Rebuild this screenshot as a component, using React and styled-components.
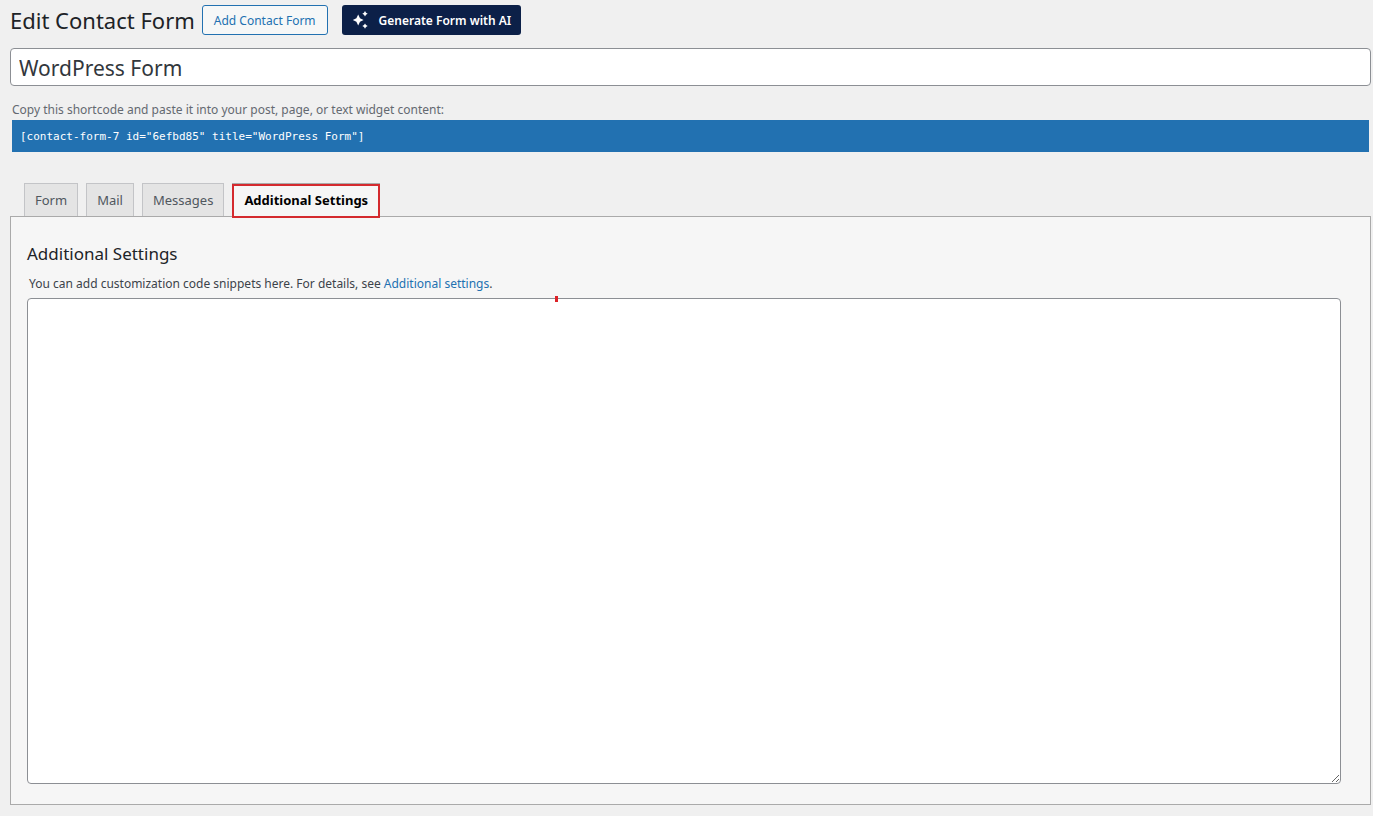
import React, { useState } from 'react';
import styled, { createGlobalStyle } from 'styled-components';

const GlobalStyle = createGlobalStyle`
  * {
    box-sizing: border-box;
  }

  body {
    margin: 0;
    background: #f0f0f0;
    color: #3c434a;
    font-family: "Noto Sans", "Open Sans", sans-serif;
    font-size: 12px;
    line-height: 20px;
  }

  button,
  input,
  textarea {
    font-family: inherit;
    margin: 0;
  }
`;

const Page = styled.main`
  padding: 5px 2px 11px 10px;
`;

const Header = styled.header`
  display: flex;
  align-items: center;
  height: 30px;
  margin-bottom: 13px;
`;

const PageTitle = styled.h1`
  margin: 0 7px 0 0;
  color: #1d2327;
  font-size: 22px;
  font-weight: 400;
  line-height: 30px;
`;

const AddButton = styled.button`
  height: 30px;
  margin-right: 14px;
  padding: 0 11px;
  border: 1px solid #2271b1;
  border-radius: 3px;
  background: #f6f7f7;
  color: #2271b1;
  font-size: 12px;
  cursor: pointer;
`;

const GenerateButton = styled.button`
  display: flex;
  align-items: center;
  gap: 9px;
  height: 30px;
  padding: 0 10px;
  border: none;
  border-radius: 3px;
  background: #0c2048;
  color: #fff;
  font-size: 12px;
  font-weight: 600;
  cursor: pointer;
`;

const TitleInput = styled.input`
  display: block;
  width: 100%;
  height: 38px;
  padding: 2px 8px 0;
  border: 1px solid #8c8f94;
  border-radius: 4px;
  background: #fff;
  color: #32373c;
  font-size: 21px;
`;

const Shortcode = styled.div`
  margin: 14px 2px 31px;
`;

const ShortcodeLabel = styled.label`
  display: block;
  color: #646970;
`;

const ShortcodeInput = styled.input`
  display: block;
  width: 100%;
  height: 32px;
  padding: 0 8px;
  border: none;
  border-radius: 0;
  background: #2271b1;
  color: #fff;
  font-family: "DejaVu Sans Mono", monospace !important;
  font-size: 11px;
`;

const Tabs = styled.div`
  display: flex;
  gap: 8px;
  padding-left: 14px;
`;

const Tab = styled.button`
  position: relative;
  height: 33px;
  padding: 0 10px;
  border: 1px solid #c3c4c7;
  border-bottom: none;
  background: #e4e4e4;
  color: #50575e;
  font-size: 13px;
  cursor: pointer;

  &[aria-selected='true'] {
    height: 34px;
    margin-bottom: -1px;
    padding: 0 11px 2px;
    border-color: #aaa;
    background: #f6f6f6;
    color: #000;
    font-weight: 700;
    z-index: 1;
  }
`;

const Highlight = styled.span`
  position: absolute;
  inset: 0 -1px -1px;
  border: 2px solid #d42a2e;
`;

const Panel = styled.section`
  padding: 25px 29px 20px 16px;
  border: 1px solid #aaa;
  background: #f6f6f6;
`;

const PanelTitle = styled.h2`
  margin: 0;
  color: #1d2327;
  font-size: 17px;
  font-weight: 400;
  line-height: 24px;
`;

const Legend = styled.label`
  display: block;
  margin: 8px 2px 4px;
`;

const Link = styled.a`
  color: #2271b1;
  text-decoration: none;
`;

const SettingsField = styled.div`
  position: relative;
`;

const SettingsArea = styled.textarea`
  display: block;
  width: 100%;
  height: 486px;
  padding: 2px 6px;
  border: 1px solid #8c8f94;
  border-radius: 4px;
  background: #fff;
  font-size: 13px;
  resize: vertical;
`;

const Marker = styled.span`
  position: absolute;
  top: -2px;
  left: 528px;
  width: 3px;
  height: 6px;
  background: #dc2127;
`;

const Sparkles = () => (
  <svg width="18" height="18" viewBox="0 0 18 18" fill="#fff" aria-hidden="true">
    <path d="M6.2 3.6 L8 7.2 L11.6 9 L8 10.8 L6.2 14.4 L4.4 10.8 L0.8 9 L4.4 7.2Z" />
    <path d="M13 0 L14 1.7 L15.7 2.7 L14 3.7 L13 5.4 L12 3.7 L10.3 2.7 L12 1.7Z" />
    <path d="M13 12.4 L14 14.1 L15.7 15.1 L14 16.1 L13 17.8 L12 16.1 L10.3 15.1 L12 14.1Z" />
  </svg>
);

const TABS = ['Form', 'Mail', 'Messages', 'Additional Settings'];

const App = () => {
  const [activeTab, setActiveTab] = useState('Additional Settings');
  const [title, setTitle] = useState('WordPress Form');
  const [settings, setSettings] = useState('');

  return (
    <>
      <GlobalStyle />
      <Page>
        <Header>
          <PageTitle>Edit Contact Form</PageTitle>
          <AddButton type="button">Add Contact Form</AddButton>
          <GenerateButton type="button">
            <Sparkles />
            Generate Form with AI
          </GenerateButton>
        </Header>

        <TitleInput
          aria-label="Form title"
          value={title}
          onChange={(e) => setTitle(e.target.value)}
        />

        <Shortcode>
          <ShortcodeLabel htmlFor="shortcode">
            Copy this shortcode and paste it into your post, page, or text widget content:
          </ShortcodeLabel>
          <ShortcodeInput
            id="shortcode"
            readOnly
            value={'[contact-form-7 id="6efbd85" title="WordPress Form"]'}
          />
        </Shortcode>

        <Tabs role="tablist">
          {TABS.map((tab) => (
            <Tab
              key={tab}
              type="button"
              role="tab"
              aria-selected={tab === activeTab}
              onClick={() => setActiveTab(tab)}
            >
              {tab}
              {tab === 'Additional Settings' && <Highlight />}
            </Tab>
          ))}
        </Tabs>

        <Panel role="tabpanel">
          <PanelTitle>Additional Settings</PanelTitle>
          <Legend htmlFor="settings">
            You can add customization code snippets here. For details, see{' '}
            <Link href="#additional-settings">Additional settings</Link>.
          </Legend>
          <SettingsField>
            <SettingsArea
              id="settings"
              value={settings}
              onChange={(e) => setSettings(e.target.value)}
            />
            <Marker />
          </SettingsField>
        </Panel>
      </Page>
    </>
  );
};

export default App;
